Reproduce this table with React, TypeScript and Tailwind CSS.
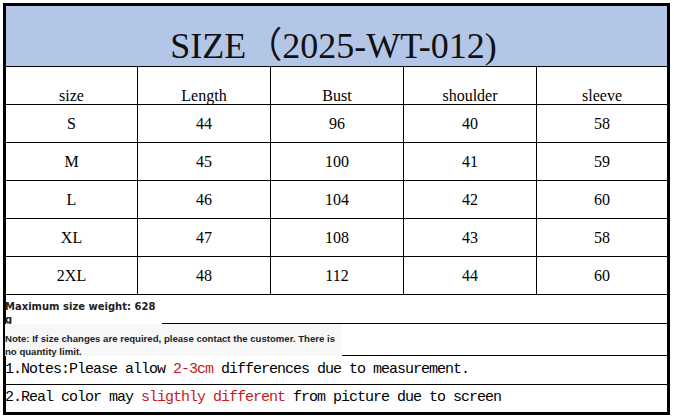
import React from 'react'

const rows = [
  ['S', '44', '96', '40', '58'],
  ['M', '45', '100', '41', '59'],
  ['L', '46', '104', '42', '60'],
  ['XL', '47', '108', '43', '58'],
  ['2XL', '48', '112', '44', '60'],
]

const headers = ['size', 'Length', 'Bust', 'shoulder', 'sleeve']

const colClass = [
  'w-[132px] border-r border-black',
  'w-[133px] border-r border-black',
  'w-[133px] border-r border-black',
  'w-[133px] border-r border-black',
  'flex-1',
]

const cellFont = "font-['Liberation_Serif',serif] text-[16px] text-black"
const mono = "font-['Liberation_Mono',monospace] text-[15px] tracking-[-1px] text-black"

export default function App() {
  return (
    <div className="w-[674px] h-[418px] bg-white p-[3px]">
      <div className="w-[667px] h-[412px] border-[3px] border-black flex flex-col">
        {/* title */}
        <div className="h-[61px] bg-[#b4c6e7] border-b border-black flex items-end justify-center pb-[2px] pr-[6px]">
          <span className="font-['Liberation_Serif','Noto_Sans_CJK_SC',serif] text-[36px] leading-none text-[#111]">
            SIZE（2025-WT-012)
          </span>
        </div>

        {/* header */}
        <div className="h-[38px] flex border-b border-black">
          {headers.map((h, i) => (
            <div key={h} className={`${colClass[i]} flex items-end justify-center leading-[16px] pb-[0px] ${cellFont}`}>
              {h}
            </div>
          ))}
        </div>

        {rows.map((r) => (
          <div key={r[0]} className="h-[38px] flex border-b border-black">
            {r.map((v, i) => (
              <div key={i} className={`${colClass[i]} flex items-center justify-center ${cellFont}`}>
                {v}
              </div>
            ))}
          </div>
        ))}

        {/* weight */}
        <div className="h-[29px] flex">
          <div className="w-[157px] pt-[5px] font-['DejaVu_Sans',sans-serif] font-bold text-[10px] leading-[13px] text-[#222] -ml-[1px]">
            Maximum size weight: 628 g
          </div>
          <div className="flex-1 border-b border-black" />
        </div>

        {/* note */}
        <div className="h-[32px] flex">
          <div className="w-[337px] bg-[#f7f7f7] pt-[8px] font-['Liberation_Sans',sans-serif] font-bold text-[9.6px] leading-[13px] text-[#222] -ml-[1px] whitespace-nowrap">
            Note: If size changes are required, please contact the customer. There is
            <br />
            no quantity limit.
          </div>
          <div className="flex-1 border-b border-black" />
        </div>

        <div className={`h-[29px] border-b border-black flex items-center -ml-[1px] whitespace-nowrap ${mono}`}>
          1.Notes:Please allow <span className="text-[#c41a1a]">&nbsp;2-3cm&nbsp;</span> differences due to measurement.
        </div>

        <div className={`flex-1 flex items-center -ml-[1px] whitespace-nowrap ${mono}`}>
          2.Real color may <span className="text-[#c41a1a]">&nbsp;sligthly different&nbsp;</span> from picture due to screen
        </div>
      </div>
    </div>
  )
}
